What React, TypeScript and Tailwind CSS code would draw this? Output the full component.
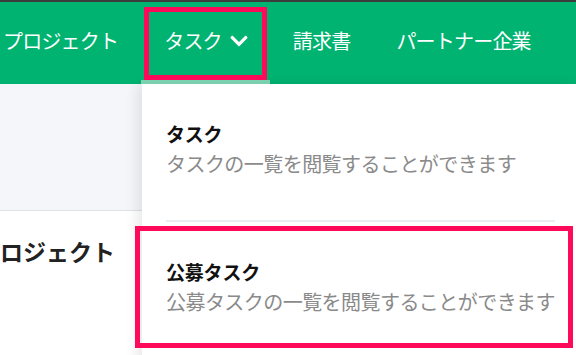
import { FaChevronDown } from "react-icons/fa";

const NAV = ["プロジェクト", "タスク", "請求書", "パートナー企業"];

const MENU = [
  { title: "タスク", desc: "タスクの一覧を閲覧することができます" },
  { title: "公募タスク", desc: "公募タスクの一覧を閲覧することができます" },
];

export default function App() {
  return (
    <div className="relative w-[576px] h-[355px] overflow-hidden bg-white font-['Noto_Sans_CJK_JP',sans-serif]">
      <div className="h-[2px] bg-[#3c3c3c]" />
      <header className="h-[82px] bg-[#00b371] flex items-stretch -ml-[20px]">
        {NAV.map((label) => {
          const active = label === "タスク";
          return (
            <div
              key={label}
              className={`flex items-center border-b-4 text-white text-[20px] tracking-[-0.8px] leading-none whitespace-nowrap ${
                active ? "pl-[23px] pr-[21px] border-[#7fd8b5]" : "px-[23px] border-transparent"
              }`}
            >
              {label}
              {active && <FaChevronDown className="ml-[7px] w-[20px] h-[20px]" />}
            </div>
          );
        })}
      </header>

      {/* page behind the menu */}
      <div className="h-[127px] bg-[#f5f6fa] border-b border-[#dfe1e5]" />
      <h1 className="mt-[25px] -ml-[23px] text-[23px] leading-[30px] font-bold text-[#222] whitespace-nowrap">
        プロジェクト
      </h1>

      {/* dropdown */}
      <div className="absolute left-[142px] top-[84px] w-[437px] h-[300px] bg-white px-[24px] shadow-[-5px_0_12px_rgba(0,0,0,0.09)]">
        {MENU.map((m, i) => (
          <div key={m.title} className={i === 0 ? "pt-[36px] pb-[43px] border-b-2 border-[#e9eef2]" : "pt-[36px]"}>
            <p className="text-[19px] leading-[27px] font-bold text-[#111] tracking-[-0.2px]">{m.title}</p>
            <p className="mt-[3px] text-[20px] leading-[27px] text-[#8a8a8a] tracking-[-0.55px] whitespace-nowrap">
              {m.desc}
            </p>
          </div>
        ))}
      </div>

      {/* highlight boxes */}
      <div className="absolute left-[144px] top-[7px] w-[123px] h-[73px] border-[5px] border-[#ff0a5a]" />
      <div className="absolute left-[135px] top-[226px] w-[438px] h-[122px] border-[5px] border-[#ff0a5a]" />
    </div>
  );
}
